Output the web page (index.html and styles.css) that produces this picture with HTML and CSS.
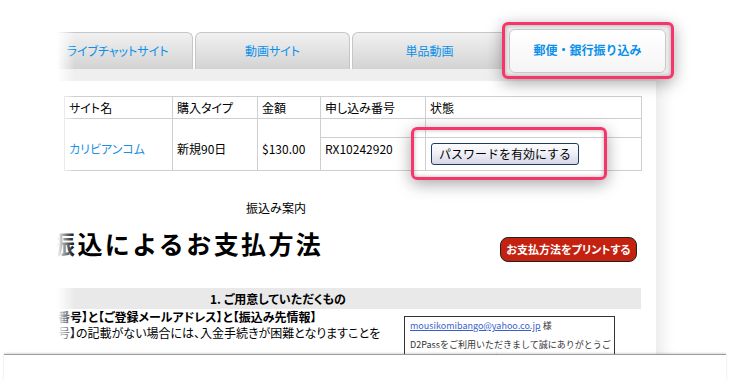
FILE: index.html
```html
<!DOCTYPE html>
<html lang="ja">
<head>
<meta charset="utf-8">
<title>郵便・銀行振り込み</title>
<link rel="stylesheet" href="styles.css">
</head>
<body>
<div class="screen">
  <div class="page">
    <div class="top"></div>
    <div class="tabs">
      <div class="tab">ライブチャットサイト</div>
      <div class="tab">動画サイト</div>
      <div class="tab">単品動画</div>
    </div>
    <div class="panel">
      <div class="band"></div>
      <table class="orders">
        <colgroup>
          <col class="c1"><col class="c2"><col class="c3"><col class="c4"><col class="c5">
        </colgroup>
        <tr class="head">
          <td>サイト名</td><td>購入タイプ</td><td>金額</td><td>申し込み番号</td><td>状態</td>
        </tr>
        <tr class="gap">
          <td rowspan="2" class="tall"><a class="site" href="#">カリビアンコム</a></td>
          <td rowspan="2" class="tall">新規90日</td>
          <td rowspan="2" class="tall">$130.00</td>
          <td></td><td></td>
        </tr>
        <tr class="data">
          <td class="num">RX10242920</td>
          <td class="act"><button class="enable" type="button">パスワードを有効にする</button></td>
        </tr>
      </table>
      <div class="guide">振込み案内</div>
      <div class="title-row">
        <h1 class="title">振込によるお支払方法</h1>
        <button class="print" type="button">お支払方法をプリントする</button>
      </div>
      <div class="section-bar">1. ご用意していただくもの</div>
      <div class="prep">
        <div class="prep-text">
          <p class="strong">番号】と【ご登録メールアドレス】と【振込み先情報】</p>
          <p>号】の記載がない場合には、入金手続きが困難となりますことを</p>
        </div>
        <div class="mail">
          <p class="mail-to"><a href="#">mousikomibango@yahoo.co.jp</a> 様</p>
          <p>D2Passをご利用いただきまして誠にありがとうご</p>
          <p>お客様のお申し込み情報は下記の通りです</p>
        </div>
      </div>
    </div>
  </div>
  <div class="fade"></div>
  <div class="callout callout-tab"><div class="active-tab">郵便・銀行振り込み</div></div>
  <div class="callout callout-btn"></div>
  <div class="tear"></div>
</div>
</body>
</html>
```
FILE: styles.css
```css
* { box-sizing: border-box; }
html, body { margin: 0; padding: 0; background: #fff; }
body {
  font-family: "Noto Sans CJK JP", "Noto Sans", sans-serif;
  font-size: 12px;
  color: #000;
}
.screen {
  position: relative;
  width: 731px;
  height: 381px;
  overflow: hidden;
  background: #fff;
}
.page {
  width: 656px;
}
.top { height: 32px; }

.tabs {
  display: flex;
  gap: 2px;
  padding-left: 38px;
  height: 37px;
}
.tab {
  flex: 0 0 155px;
  border: 1px solid #c6c6c6;
  border-bottom: 0;
  border-radius: 6px 6px 0 0;
  background: linear-gradient(#f1f1f1, #d3d3d3);
  color: #0a90ea;
  display: flex;
  align-items: center;
  justify-content: center;
  font-feature-settings: "palt";
  padding-bottom: 2px;
}
.tab:first-child { padding-left: 4px; }

.panel {
  background: #fff;
  box-shadow: 12px 0 14px -6px rgba(0,0,0,0.09);
  height: 320px;
}
.band { height: 12px; background: #efefef; }

.orders {
  margin: 15px 0 0 64px;
  border-collapse: collapse;
  width: 577px;
  table-layout: fixed;
  font-feature-settings: "palt";
}
.c1 { width: 108px; }
.c2 { width: 85px; }
.c3 { width: 63px; }
.c4 { width: 105px; }
.c5 { width: 216px; }
.orders td {
  border: 1px solid #cfcfcf;
  padding: 0 4px;
  line-height: 16px;
  vertical-align: top;
  white-space: nowrap;
}
.orders tr.head td { height: 22px; vertical-align: middle; }
.orders tr.gap td { height: 19px; }
.orders tr.data td { height: 33px; }
.orders td.tall { padding-top: 22px; }
.orders td.num { padding-top: 3px; }
.orders td.act { padding-top: 5px; padding-left: 5px; }
.site { color: #1a8fe6; text-decoration: none; }

.enable {
  font-family: "Noto Sans CJK JP", sans-serif;
  font-size: 12px;
  width: 148px;
  height: 22px;
  padding: 0;
  border: 1px solid #1c3a66;
  border-radius: 3px;
  background: linear-gradient(#fdfdff 0%, #eeeef6 50%, #d6d6e8 100%);
  color: #000;
  line-height: 20px;
}

.guide {
  width: 552px;
  text-align: center;
  margin-top: 29px;
  line-height: 16px;
}
.title-row {
  display: flex;
  justify-content: space-between;
  align-items: flex-start;
  margin-top: 11px;
  padding-right: 19px;
}
.title {
  margin: 0 0 0 50px;
  font-size: 25px;
  letter-spacing: 2.4px;
  line-height: 32px;
  font-weight: bold;
  white-space: nowrap;
}
.print {
  margin-top: 10px;
  width: 137px;
  height: 25px;
  padding: 0;
  border: 1px solid #222;
  border-radius: 8px;
  background: #c42211;
  color: #fff;
  font-family: "Noto Sans CJK JP", sans-serif;
  font-size: 11px;
  font-weight: bold;
  font-feature-settings: "palt";
  line-height: 23px;
  white-space: nowrap;
}

.section-bar {
  margin: 26px 15px 0 0;
  height: 21px;
  line-height: 21px;
  background: #e9e9e9;
  padding-left: 210px;
  font-weight: bold;
  font-feature-settings: "palt";
}

.prep {
  display: flex;
  justify-content: space-between;
  padding-right: 41px;
}
.prep-text {
  padding-left: 58px;
  padding-top: 0;
  font-feature-settings: "palt";
  white-space: nowrap;
}
.prep-text p { margin: 0; line-height: 16px; }
.prep-text p.strong { font-weight: bold; }

.mail {
  margin-top: 7px;
  width: 211px;
  height: 60px;
  border: 1px solid #333;
  padding: 2px 5px;
  font-size: 9px;
  color: #333;
  overflow: hidden;
  white-space: nowrap;
}
.mail p { margin: 0; line-height: 14px; }
.mail p.mail-to { margin-bottom: 5px; }
.mail a { color: #3a5fcc; }

.fade {
  position: absolute;
  left: 0;
  top: 0;
  width: 76px;
  height: 353px;
  background: linear-gradient(to right, #fff 0, #fff 57px, rgba(255,255,255,0) 75px);
}

.callout {
  position: absolute;
  border: 3px solid #f9346a;
  border-radius: 6px;
  box-shadow: 0 4px 16px rgba(0,0,0,0.35), inset 0 0 4px rgba(0,0,0,0.3);
}
.callout-tab {
  left: 502px;
  top: 22px;
  width: 172px;
  height: 57px;
  background: #ececec;
  padding: 4px 5px 0 4px;
}
.active-tab {
  height: 44px;
  border: 1px solid #c8c8c8;
  border-radius: 6px;
  background: linear-gradient(#ffffff, #f5f5f5);
  color: #0a90ea;
  font-weight: bold;
  display: flex;
  align-items: center;
  justify-content: center;
  padding-bottom: 4px;
}
.callout-btn {
  left: 411px;
  top: 127px;
  width: 196px;
  height: 53px;
}

.tear {
  position: absolute;
  left: 4px;
  right: 5px;
  top: 354px;
  bottom: 0;
  background: #fff;
  border-top: 1px solid #9c9c9c;
  box-shadow: 0 -1px 2px rgba(0,0,0,0.15);
}
```
